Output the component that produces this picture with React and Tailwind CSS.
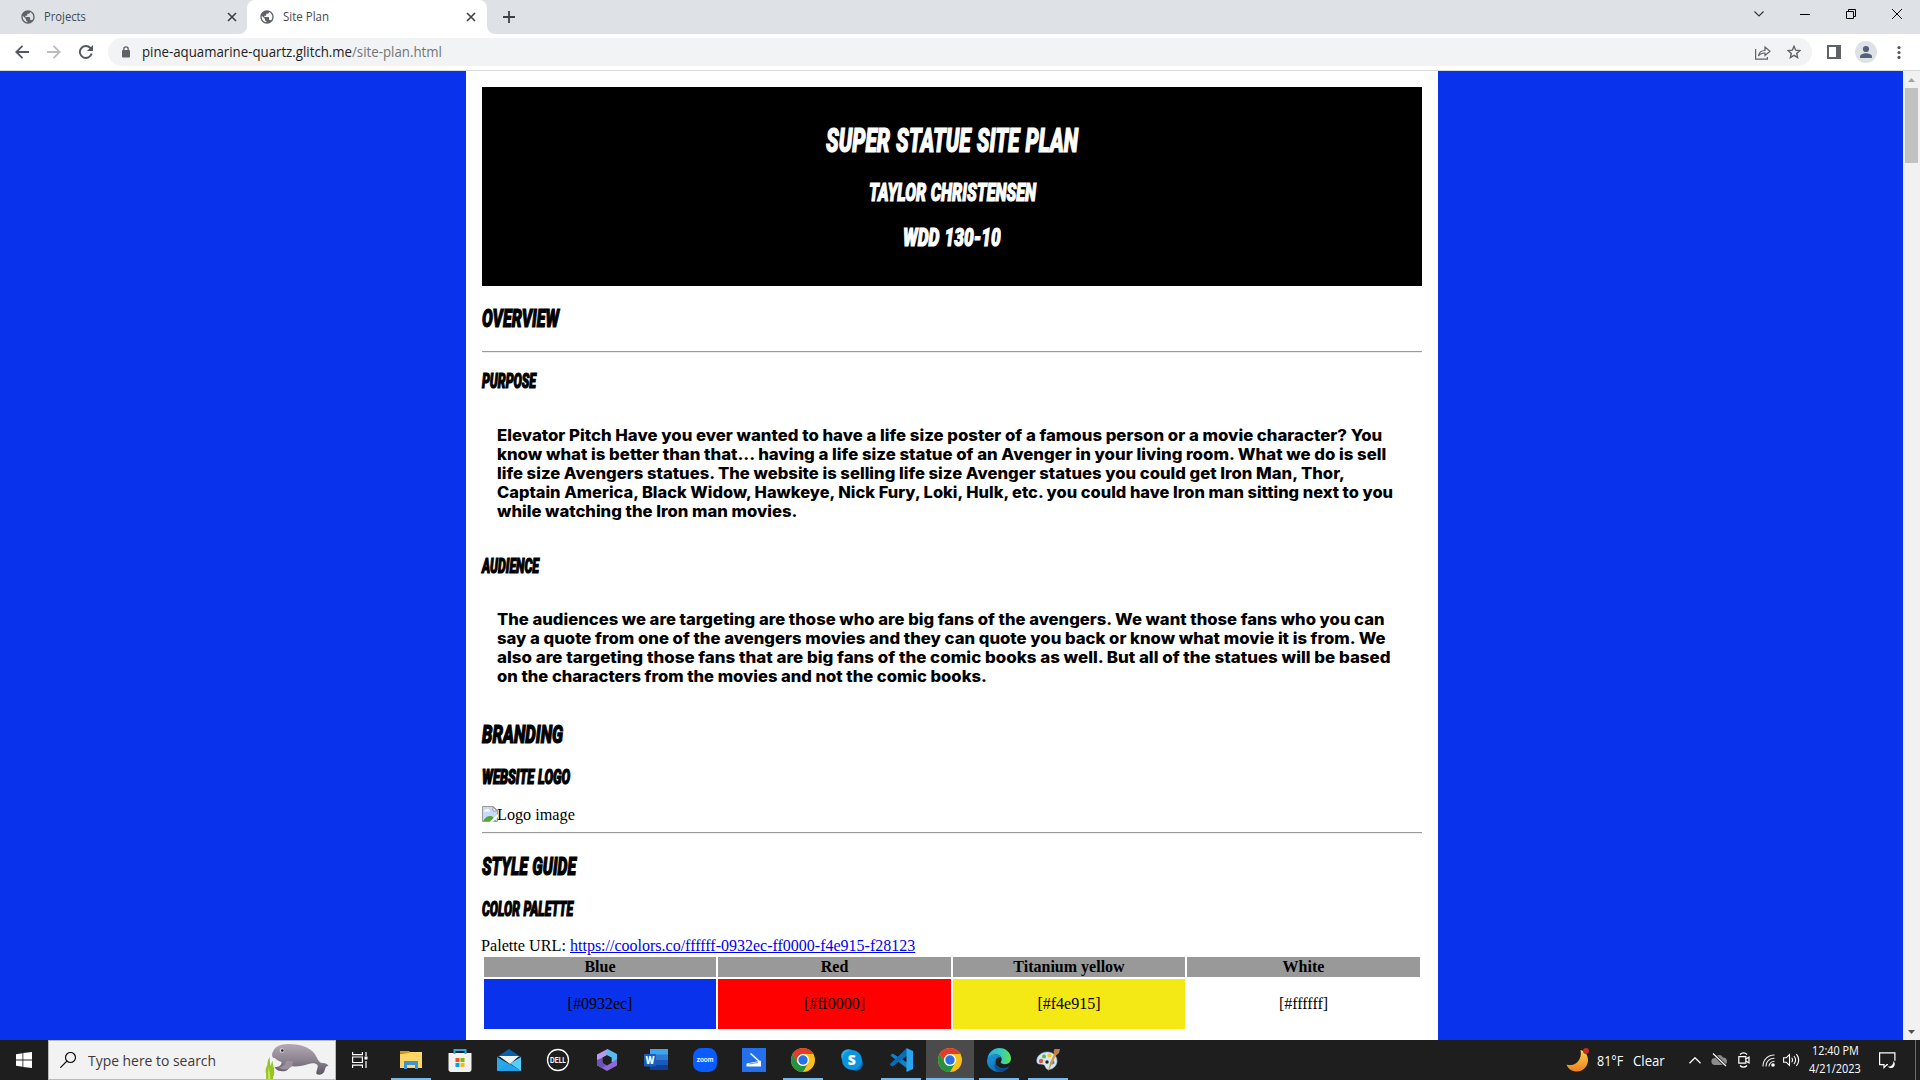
import { useLayoutEffect, useRef, useState } from "react";

/* Stretches a single line of text horizontally so it fills its box. */
function Fit({ className = "", inner = "", children }) {
  const box = useRef(null);
  const text = useRef(null);
  const [s, setS] = useState(1);
  useLayoutEffect(() => {
    setS(box.current.offsetWidth / text.current.offsetWidth);
  }, []);
  return (
    <span ref={box} className={`block shrink-0 whitespace-nowrap text-left ${className}`}>
      <span ref={text} className={`inline-block origin-left ${inner}`} style={{ transform: `scaleX(${s})` }}>
        {children}
      </span>
    </span>
  );
}

const COMIC = "font-['Roboto'] font-black uppercase italic [-webkit-text-stroke:1.2px_currentColor] [word-spacing:0.04em] whitespace-pre";

function Title({ className, children }) {
  return (
    <Fit className={className} inner={COMIC}>
      {children}
    </Fit>
  );
}

function Hr({ className = "" }) {
  return <div className={`h-[2px] border-t border-b border-t-[#9a9a9a] border-b-[#eeeeee] ${className}`} />;
}

function Para({ lines, className = "" }) {
  return (
    <div className={`pl-[15px] font-['Inter'] text-[15.5px] font-extrabold leading-[20px] text-black ${className}`}>
      {lines.map(([w, t]) => (
        <Fit key={t} className={`h-[19px] ${w}`}>
          {t}
        </Fit>
      ))}
    </div>
  );
}

function Globe() {
  return (
    <svg className="size-4 shrink-0" viewBox="0 0 24 24" fill="#5f6368">
      <path d="M12 2C6.48 2 2 6.48 2 12s4.48 10 10 10 10-4.48 10-10S17.52 2 12 2zm-1 17.93c-3.95-.49-7-3.85-7-7.93 0-.62.08-1.21.21-1.79L9 15v1c0 1.1.9 2 2 2v1.93zm6.9-2.54c-.26-.81-1-1.39-1.9-1.39h-1v-3c0-.55-.45-1-1-1H8v-2h2c.55 0 1-.45 1-1V7h2c1.1 0 2-.9 2-2v-.41c2.93 1.19 5 4.06 5 7.41 0 2.08-.8 3.97-2.1 5.39z" />
    </svg>
  );
}

function Cross() {
  return (
    <svg className="size-[10px] shrink-0" viewBox="0 0 10 10" stroke="#3c4043" strokeWidth="1.6">
      <path d="M1 1l8 8M9 1l-8 8" />
    </svg>
  );
}

function TabStrip() {
  return (
    <div className="flex h-[34px] items-stretch bg-[#dee1e6] font-['Open_Sans'] text-[12px] text-[#45494d]">
      <div className="flex w-[247px] items-center pl-5 pr-[10px]">
        <Globe />
        <Fit className="ml-2 w-[42px]">Projects</Fit>
        <div className="ml-auto"><Cross /></div>
      </div>
      <div className="relative flex w-[240px] items-center rounded-t-lg bg-white pl-3 pr-[11px]">
        <svg className="absolute -left-2 bottom-0 size-2" viewBox="0 0 8 8" fill="#fff"><path d="M8 0v8H0a8 8 0 0 0 8-8z" /></svg>
        <svg className="absolute -right-2 bottom-0 size-2" viewBox="0 0 8 8" fill="#fff"><path d="M0 0v8h8a8 8 0 0 1-8-8z" /></svg>
        <Globe />
        <Fit className="ml-2 w-[46px]">Site Plan</Fit>
        <div className="ml-auto"><Cross /></div>
      </div>
      <svg className="ml-4 mt-[11px] size-3" viewBox="0 0 12 12" stroke="#3c4043" strokeWidth="1.8"><path d="M6 0v12M0 6h12" /></svg>
      <div className="ml-auto flex h-7 items-center pr-[18px]">
        <svg className="mr-[36px] h-[6px] w-[10px]" viewBox="0 0 10 6" fill="none" stroke="#333" strokeWidth="1.1"><path d="M.5 .5L5 5 9.500 .5" /></svg>
        <div className="mr-[36px] h-px w-[10px] bg-black" />
        <svg className="mr-[36px] size-[10px]" viewBox="0 0 10 10" fill="none" stroke="#000"><path d="M.5 2.500h7v7h-7zM2.500 2.500v-2h7v7h-2" /></svg>
        <svg className="size-[10px]" viewBox="0 0 10 10" stroke="#000"><path d="M0 0l10 10M10 0L0 10" /></svg>
      </div>
    </div>
  );
}

function Toolbar() {
  return (
    <div className="flex h-[37px] items-start border-b border-[#d9dadc] bg-white">
      <div className="flex h-9 w-[108px] items-center pl-[15px]">
        <svg className="size-[14px]" viewBox="0 0 14 14" fill="none" stroke="#54585c" strokeWidth="1.8"><path d="M14 7H1.500M7.500.8L1.300 7l6.200 6.200" /></svg>
        <svg className="ml-[18px] size-[14px]" viewBox="0 0 14 14" fill="none" stroke="#babcbe" strokeWidth="1.8"><path d="M0 7h12.500M6.500.8L12.700 7l-6.200 6.200" /></svg>
        <svg className="ml-[18px] size-[14px]" viewBox="0 0 14 14" fill="none" stroke="#54585c" strokeWidth="1.9"><path d="M12.700 8.500A6 6 0 1 1 11.400 3l1.200 1.400" /><path d="M14 0v6H8z" fill="#54585c" stroke="none" /></svg>
      </div>
      <div className="mt-1 flex h-7 w-[1704px] items-center rounded-full bg-[#f1f3f4] pl-[14px] pr-[11px] font-['Open_Sans'] text-[14px]">
        <svg className="h-[12px] w-[8px]" viewBox="0 0 8 12"><path d="M1.800 5V3a2.200 2.200 0 0 1 4.400 0v2" fill="none" stroke="#5f6368" strokeWidth="1.300" /><rect y="4" width="8" height="7.500" rx="1" fill="#5f6368" /></svg>
        <Fit className="mb-px ml-3 w-[210px] text-[#202124]">pine-aquamarine-quartz.glitch.me</Fit>
        <Fit className="mb-px w-[90px] text-[#70757a]">/site-plan.html</Fit>
        <svg className="ml-auto h-[15px] w-[16px]" viewBox="0 0 16 15" fill="none" stroke="#5f6368" strokeWidth="1.200"><path d="M.6 4v10.200h11.800V12M3.500 11c.5-4 3-5.500 6.500-5.500V2l5 4.300-5 4.200V8C7 8 5 8.800 3.500 11z" /></svg>
        <svg className="ml-4 size-[14px]" viewBox="0 0 14 14" fill="none" stroke="#5f6368" strokeWidth="1.400"><path d="M7 1.300l1.700 3.900 4.100.4-3.100 2.800.9 4.200L7 10.400l-3.600 2.200.9-4.200-3.100-2.800 4.100-.4z" /></svg>
      </div>
      <div className="flex h-9 items-center pl-[15px]">
        <svg className="size-[14px]" viewBox="0 0 14 14"><path d="M0 0h14v14H0zM2 2v10h7V2z" fill="#5f6368" fillRule="evenodd" /></svg>
        <svg className="ml-[14px] size-[22px]" viewBox="0 0 22 22"><circle cx="11" cy="11" r="11" fill="#dee1e6" /><g fill="#54617a"><circle cx="11" cy="8" r="3.100" /><path d="M5 17v-1.500C5 13.300 9 12.200 11 12.200s6 1.100 6 3.300V17z" /></g></svg>
        <svg className="ml-5 h-[13px] w-[4px]" viewBox="0 0 4 13" fill="#54585c"><circle cx="2" cy="1.600" r="1.600" /><circle cx="2" cy="6.500" r="1.600" /><circle cx="2" cy="11.400" r="1.600" /></svg>
      </div>
    </div>
  );
}

function Scrollbar() {
  return (
    <div className="flex w-[17px] flex-col items-center bg-[#f1f1f1]">
      <div className="flex h-[17px] items-center"><svg className="h-1 w-[7px]" viewBox="0 0 7 4" fill="#a3a3a3"><path d="M3.500 0L7 4H0z" /></svg></div>
      <div className="h-[75px] w-[13px] bg-[#c1c1c1]" />
      <div className="mt-auto flex h-[17px] items-center"><svg className="h-1 w-[7px]" viewBox="0 0 7 4" fill="#505050"><path d="M3.500 4L7 0H0z" /></svg></div>
    </div>
  );
}

const PITCH = [
  ["w-[885px]", "Elevator Pitch Have you ever wanted to have a life size poster of a famous person or a movie character? You"],
  ["w-[889px]", "know what is better than that... having a life size statue of an Avenger in your living room. What we do is sell"],
  ["w-[848px]", "life size Avengers statues. The website is selling life size Avenger statues you could get Iron Man, Thor,"],
  ["w-[896px]", "Captain America, Black Widow, Hawkeye, Nick Fury, Loki, Hulk, etc. you could have Iron man sitting next to you"],
  ["w-[300px]", "while watching the Iron man movies."],
];
const AUDIENCE = [
  ["w-[888px]", "The audiences we are targeting are those who are big fans of the avengers. We want those fans who you can"],
  ["w-[889px]", "say a quote from one of the avengers movies and they can quote you back or know what movie it is from. We"],
  ["w-[894px]", "also are targeting those fans that are big fans of the comic books as well. But all of the statues will be based"],
  ["w-[490px]", "on the characters from the movies and not the comic books."],
];

function Palette() {
  const head = ["Blue", "Red", "Titanium yellow", "White"];
  const cells = [
    ["bg-[#0932ec]", "[#0932ec]"],
    ["bg-[#ff0000]", "[#ff0000]"],
    ["bg-[#f4e915]", "[#f4e915]"],
    ["bg-white", "[#ffffff]"],
  ];
  return (
    <div className="grid grid-cols-[232px_233px_232px_233px] gap-[2px] px-[2px] text-center">
      {head.map((h) => <div key={h} className="h-5 bg-[#999999] font-bold leading-5">{h}</div>)}
      {cells.map(([c, t]) => <div key={t} className={`h-[50px] leading-[50px] ${c}`}>{t}</div>)}
    </div>
  );
}

function Page() {
  return (
    <div className="flex h-[969px] bg-[#0932ec]">
      <div className="ml-[466px] h-full w-[972px] overflow-hidden bg-white px-4 pt-4 font-['Liberation_Serif',serif] text-[16px] text-black">
        <header className="flex h-[199px] flex-col items-center bg-black pt-[35px] text-white">
          <Title className="h-10 w-[252px] text-[34px] leading-[36px]">Super Statue Site Plan</Title>
          <Title className="mt-[17px] h-7 w-[167px] text-[25.5px] leading-[26px]">Taylor Christensen</Title>
          <Title className="mt-[17px] h-7 w-[98px] text-[25.5px] leading-[26px]">WDD 130-10</Title>
        </header>
        <Title className="mt-[19px] h-[46px] w-[77px] text-[25.5px] leading-[26px]">Overview</Title>
        <Hr />
        <Title className="mt-[18px] h-[20px] w-[54px] text-[19.5px] leading-[22px]">Purpose</Title>
        <Para className="mt-[35px] h-[95px]" lines={PITCH} />
        <Title className="mt-[35px] h-[20px] w-[57px] text-[19.5px] leading-[22px]">Audience</Title>
        <Para className="mt-[34px] h-[76px]" lines={AUDIENCE} />
        <Title className="mt-[35px] h-[28px] w-[81px] text-[25.5px] leading-[26px]">Branding</Title>
        <Title className="mt-[18px] h-[20px] w-[88px] text-[19.5px] leading-[22px]">Website Logo</Title>
        <div className="mt-[19px] flex h-[26px]">
          <svg className="size-4 shrink-0" viewBox="0 0 16 16">
            <path d="M.5.5h11l4 4v11H.5z" fill="#c6dafb" stroke="#9b9b9b" />
            <path d="M2 5.500a2 2 0 0 1 2.500-1.800A2 2 0 0 1 8 5.500z" fill="#fff" />
            <path d="M1 15c2-3 4-5 7-5s4 2 6 5z" fill="#55a63a" />
            <path d="M11 1v4h4z" fill="#fff" stroke="#9b9b9b" />
            <path d="M16 9v-1L7.500 16H11l5-5z" fill="#fff" />
          </svg>
          <Fit className="-ml-px h-[18px] w-[78px] leading-[18px]">Logo image</Fit>
        </div>
        <Hr />
        <Title className="mt-[19px] h-[28px] w-[94px] text-[25.5px] leading-[26px]">Style Guide</Title>
        <Title className="mt-[18px] h-[20px] w-[91px] text-[19.5px] leading-[22px]">Color Palette</Title>
        <div className="mt-[18px] flex h-[20px] leading-[18px]">
          <Fit className="-ml-px w-[89px]" inner="whitespace-pre">Palette URL: </Fit>
          <Fit className="w-[345px] text-[#0000ee]" inner="underline">https://coolors.co/ffffff-0932ec-ff0000-f4e915-f28123</Fit>
        </div>
        <Palette />
      </div>
      <div className="ml-auto flex"><Scrollbar /></div>
    </div>
  );
}

function Chrome() {
  return (
    <svg className="size-6" viewBox="0 0 24 24">
      <circle cx="12" cy="12" r="12" fill="#fbc116" />
      <path d="M1.610 6A12 12 0 0 1 22.390 6H12a6 6 0 0 0-5.200 9z" fill="#e33b2e" />
      <path d="M1.610 6A12 12 0 0 0 12 24l5.200-9a6 6 0 0 1-10.400 0z" fill="#229342" />
      <circle cx="12" cy="12" r="6" fill="#fff" />
      <circle cx="12" cy="12" r="4.700" fill="#2673e8" />
    </svg>
  );
}

const APPS = [
  { run: true, icon: <svg className="size-6" viewBox="0 0 24 24"><path d="M1 3h9l2 2H1z" fill="#d99a10" /><path d="M1 5.500L10 5l1-1h12v16H1z" fill="#ffd767" /><path d="M5 13h14v8h-3v-4H8v4H5z" fill="#3f94d6" /></svg> },
  { icon: <svg className="size-6" viewBox="0 0 24 24"><path d="M.5 5h23v16a2.500 2.500 0 0 1-2.500 3H3a2.500 2.500 0 0 1-2.500-3z" fill="#f2f2f2" /><path d="M6.500 6V2h11v4" fill="none" stroke="#29a9e8" strokeWidth="2" /><path d="M7.500 10h4v4h-4z" fill="#f25022" /><path d="M12.500 10h4v4h-4z" fill="#7fba00" /><path d="M7.500 15h4v4h-4z" fill="#00a4ef" /><path d="M12.500 15h4v4h-4z" fill="#ffb900" /></svg> },
  { icon: <svg className="size-6" viewBox="0 0 24 24"><path d="M0 9L12 1l12 8z" fill="#0a61ab" /><path d="M2 8h20l-9 8z" fill="#f3f3f3" /><path d="M0 9l24 14H0z" fill="#29a8ea" /><path d="M24 9v14L13 15.500z" fill="#53d0fa" /><path d="M0 23l12-7.500L24 23z" fill="#25a2e7" /></svg> },
  { icon: <svg className="size-6" viewBox="0 0 24 24"><circle cx="12" cy="12" r="10.500" fill="none" stroke="#fff" strokeWidth="1.300" /><text x="4" y="14.800" textLength="16" lengthAdjust="spacingAndGlyphs" fontFamily="Inter, sans-serif" fontSize="7.500" fontWeight="700" fill="#fff">DELL</text></svg> },
  { icon: (
    <svg className="size-6" viewBox="0 0 24 24">
      <path d="M12.500 1L2 6.500v10.800l5.500 2.400V9.500L16 5z" fill="#b79af0" />
      <path d="M12.500 1L22 6v7l-5.500 1.500v-5L11 6.800z" fill="#58bdec" />
      <path d="M22 11v6.500L12 23l-8-4.500 4.500-2.500 3.500 1.500 5-3z" fill="#8f6ad6" />
      <path d="M2 12v5.300L7 20l4.500-2.700L8 15V9.500z" fill="#6a55b5" />
      <path d="M12 7.500l4.300 2.200v4.600L12 16.500l-4.300-2.200V9.700z" fill="#1e1e1e" />
    </svg>
  ) },
  { icon: <svg className="size-6" viewBox="0 0 24 24"><path d="M6 1h18v6H6z" fill="#41a5ee" /><path d="M6 6.500h18V12H6z" fill="#2b7cd3" /><path d="M6 12h18v5.500H6z" fill="#185abd" /><path d="M6 17h18v5H6z" fill="#103f91" /><rect y="6" width="12" height="12.500" rx="1" fill="#1a5dbe" /><text x="1.500" y="16" fontFamily="Open Sans, sans-serif" fontSize="10" fontWeight="800" fill="#fff" textLength="9" lengthAdjust="spacingAndGlyphs">W</text></svg> },
  { icon: <svg className="size-6" viewBox="0 0 24 24"><rect width="24" height="24" rx="8.500" fill="#0b5cff" /><text x="3.500" y="14.300" textLength="17" lengthAdjust="spacingAndGlyphs" fontFamily="Inter, sans-serif" fontSize="7" fontWeight="600" fill="#fff">zoom</text></svg> },
  { icon: <svg className="size-6" viewBox="0 0 24 24"><path d="M0 0h24v24H0z" fill="#2470ec" /><path d="M8.500 5.500L18 14" stroke="#fff" strokeWidth="1.500" /><path d="M4.500 15.500L19 12.800v5.700H4.500z" fill="#fff" /><path d="M7 16l9-1.500" stroke="#2470ec" strokeWidth=".7" /></svg> },
  { run: true, icon: <Chrome /> },
  { icon: <svg className="size-6" viewBox="0 0 24 24"><circle cx="8.500" cy="8.500" r="7.300" fill="#28b4ef" /><circle cx="15.500" cy="15.500" r="7.300" fill="#0873c4" /><circle cx="12" cy="12" r="10" fill="#0d94df" /><text x="7.800" y="17" fontFamily="Open Sans, sans-serif" fontSize="14" fontWeight="800" fill="#fff">S</text></svg> },
  { run: true, icon: <svg className="size-6" viewBox="0 0 24 24"><path d="M2 7.500L18 20v-5L3.500 6z" fill="#1382c9" stroke="#1382c9" strokeLinejoin="round" /><path d="M1 16.500L17.500 1v6.500L3.500 18z" fill="#0a6cb3" stroke="#0a6cb3" strokeLinejoin="round" /><path d="M17.500 0L24 3v18l-6.500 3z" fill="#27a4f2" /></svg> },
  { run: true, active: true, icon: <Chrome /> },
  { run: true, icon: (
    <svg className="size-6" viewBox="0 0 24 24">
      <defs>
        <linearGradient id="edgeTop"><stop offset="0" stopColor="#2aa8e8" /><stop offset=".6" stopColor="#36cdb4" /><stop offset="1" stopColor="#64df52" /></linearGradient>
        <linearGradient id="edgeLow" x2="1" y2="1"><stop offset="0" stopColor="#1b9de2" /><stop offset="1" stopColor="#0f529c" /></linearGradient>
      </defs>
      <path d="M.3 11C1.500 4 6.500 0 12.300 0 19 0 24 5 24 10.500c0 3.500-2.500 5.700-6 5.700-2 0-4.300-.7-4.300-1.900 0-.7 1-1.200 1-3C14.700 8.500 12 6.500 8.500 6.500 5 6.500 2 8.500.3 11z" fill="url(#edgeTop)" />
      <path d="M0 12.500C1 8.500 4.500 6.300 8.500 6.300c3 0 5 1.500 5.800 3.200-3-1-5.800.7-5.800 4.500 0 4 4 6.500 8.500 6.200 2.500-.2 4-1.200 5-1.700C20 22 16 24 12 24 5 24-.5 18.500 0 12.500z" fill="url(#edgeLow)" />
      <path d="M8.500 14c-.2 4.500 4 7 8.500 6.400 2.500-.3 4-1.200 5-1.900-2 3.600-6 5.500-9.500 5.500C8 22 6.500 18 8.500 14z" fill="#0c4b96" />
    </svg>
  ) },
  { run: true, icon: (
    <svg className="size-6" viewBox="0 0 24 24">
      <path d="M11.500 4C17 4 21 8 21 13c0 4.500-4 8.500-8.500 8.500-3 0-2.500-2.500-4-4.200C6.500 15 1 18 .8 13 .6 8 5.500 4 11.500 4z" fill="#d5e9f5" stroke="#9cc0d8" strokeWidth=".6" />
      <circle cx="5" cy="13" r="2.200" fill="#e2574c" /><circle cx="8" cy="8.500" r="2" fill="#67b346" /><circle cx="13.500" cy="7.500" r="2" fill="#f3c530" /><circle cx="11" cy="14" r="1.700" fill="#222" /><circle cx="16.500" cy="14.500" r="2" fill="#4a8fdc" />
      <path d="M12 24l2-9 5-11 2 1-5 11z" fill="#e4933a" /><path d="M17.500 4l1-3 5.500 0-1 4-3 2.500z" fill="#b88150" />
    </svg>
  ) },
];

function Taskbar() {
  return (
    <div className="flex h-10 items-center bg-[#1e1e1f] text-white">
      <svg className="ml-4 size-4 shrink-0" viewBox="0 0 16 16" fill="#fff"><path d="M0 2.200L6.500 1.200v6.400H0zM7.300 1.100L16 0v7.600H7.300zM0 8.400h6.500v6.400L0 13.800zM7.300 8.400H16V16l-8.700-1.100z" /></svg>
      <div className="ml-4 flex h-10 w-72 shrink-0 items-center border border-[#b9b9b9] bg-[#f2f2f2] pl-[11px]">
        <svg className="size-4" viewBox="0 0 16 16" fill="none" stroke="#111" strokeWidth="1.200"><circle cx="10.500" cy="5.500" r="5" /><path d="M7 9L.3 15.700" /></svg>
        <Fit className="ml-3 w-32 font-['Open_Sans'] text-[15px] text-[#3a3a3a]">Type here to search</Fit>
        <svg className="ml-[49px] h-[38px] w-[64px]" viewBox="0 0 64 38">
          <defs><linearGradient id="seacow" x2="0" y2="1"><stop offset="0" stopColor="#b2a9b5" /><stop offset=".5" stopColor="#8e8592" /><stop offset="1" stopColor="#5c5563" /></linearGradient></defs>
          <path d="M1 38C2 32-1 30 2 25c1-3 0-6 3-9-1 4 1 6 0 9 2-1 1-4 3-5-1 4 2 7 1 10 1 4-1 5-1 8z" fill="#93c524" />
          <path d="M3 38c1-5-1-7 1-12 0 5 2 7 1 12z" fill="#d2e35c" />
          <path d="M8 11C9 6 15 3 23 3c14 0 25 4 29 14 1.500 3 3 5 5.500 5 3 0 5 1 6 3-3 0-3 2-4 5-1 3-5 5-8 3-1-3 2-6 1-9-2-2-5-2-9-1-6 2-12 3-19 2 0 4-4 6-9 5-3 0-5-2-6-4 4 0 7-1 7-5-4-1-5-3-7-4-2 0-3-2-2-6z" fill="url(#seacow)" />
          <path d="M21 20c-1 4-3 6-7 6 3 4 10 3 13-1l1-5z" fill="#9a919d" />
          <circle cx="17" cy="9.500" r="2.300" fill="#d9d4da" /><circle cx="17.300" cy="9.500" r="1.300" fill="#222" />
        </svg>
      </div>
      <svg className="ml-4 h-4 w-[17px] shrink-0" viewBox="0 0 17 16" fill="none" stroke="#fff" strokeWidth="1.200"><path d="M.6 0v2.600h9.800V0M.6 5h9.800v5.500H.6zM.6 16v-2.800h9.800V16M14 0v4M14 9v7" /><path d="M12.500 4.500h3v3h-3z" fill="#fff" stroke="none" /></svg>
      <div className="ml-[18px] flex h-10 gap-px">
        {APPS.map((a, i) => (
          <div key={i} className={`flex h-10 w-12 flex-col items-center pt-2 ${a.active ? "bg-[#4b4b4c]" : ""}`}>
            {a.icon}
            {a.run && <div className={`mt-auto h-[2px] bg-[#76b9ed] ${a.active ? "w-12" : "w-10"}`} />}
          </div>
        ))}
      </div>
      <div className="ml-auto flex h-10 items-center font-['Open_Sans']">
        <svg className="size-6 shrink-0" viewBox="0 0 24 24"><defs><linearGradient id="moon" x2="0" y2="1"><stop offset="0" stopColor="#fbd34c" /><stop offset="1" stopColor="#ee7f1c" /></linearGradient></defs><path d="M14.500 2C19 3 22.500 8 22 13c-.6 6-5.500 10.500-11 10.500C6 23.500 2 21 .5 16.500 3 17.500 8 17.500 11.500 14c3-3 4-7.500 3-12z" fill="url(#moon)" /><circle cx="20" cy="3" r="3" fill="#c92a1e" /></svg>
        <Fit className="ml-[7px] w-[26px] text-[14px]">81°F</Fit>
        <Fit className="ml-[10px] w-[32px] text-[14px]">Clear</Fit>
        <svg className="ml-[24px] h-[7px] w-[12px]" viewBox="0 0 12 7" fill="none" stroke="#fff" strokeWidth="1.300"><path d="M.5 6.300L6 .8l5.500 5.500" /></svg>
        <svg className="ml-[10px] h-[14px] w-[17px]" viewBox="0 0 17 14"><path d="M4 12a3.500 3.500 0 0 1-.2-7A4.500 4.500 0 0 1 12 4.500 3.800 3.800 0 0 1 13 12z" fill="#8c8c8c" /><path d="M2 .5L15 13" stroke="#1e1e1f" strokeWidth="3" /><path d="M2 .5L15 13" stroke="#fff" strokeWidth="1.200" /></svg>
        <svg className="ml-[10px] h-[16px] w-[12px]" viewBox="0 0 12 16" fill="none" stroke="#fff" strokeWidth="1.200"><path d="M.8 4.600h7v6.500h-7zM8 7l3-2v6L8 9M2 2.500C4 .3 7 .3 9 2.500M2 13.500c2 2.200 5 2.200 7 0" /></svg>
        <svg className="ml-[12px] h-[13px] w-[13px]" viewBox="0 0 13 13" fill="none" stroke="#e8e8e8" strokeWidth="1.100"><path d="M1 12.500C1 5.500 6 1 12.500 1M4 12.500c0-5 3.500-8.300 8.500-8.300M7 12.500c0-3 2.200-5.200 5.500-5.200" /><circle cx="11" cy="11" r="1.800" fill="#fff" stroke="none" /></svg>
        <svg className="ml-[8px] h-[14px] w-[17px]" viewBox="0 0 17 14" fill="none" stroke="#fff" strokeWidth="1.100"><path d="M.6 4.800h2.600L6.500 1.500v11L3.200 9.200H.6zM8.700 4.700c1 1.400 1 3.200 0 4.600M11 3c2 2.500 2 5.500 0 8M13.400 1.200c2.800 3.500 2.800 8.100 0 11.600" /></svg>
        <div className="ml-[9px] flex w-[52px] flex-col items-center text-[12px] leading-[18px]">
          <Fit className="w-[47px]">12:40 PM</Fit>
          <Fit className="w-[52px]">4/21/2023</Fit>
        </div>
        <svg className="ml-[18px] size-[17px]" viewBox="0 0 17 17"><path d="M9 12.600H8L5 15.500v-2.900H.6V.8h15.300v8" fill="none" stroke="#fff" strokeWidth="1.200" /><path d="M14.500 9c2 2 1.500 5-.5 6.500-2 1-4 .5-5-1 3 .5 5.500-2 5.500-5.500z" fill="#fff" /></svg>
        <div className="ml-[19px] mr-1 h-10 w-px bg-[#6c6c6c]" />
      </div>
    </div>
  );
}

export default function App() {
  return (
    <div className="h-[1080px] w-[1920px] overflow-hidden bg-white">
      <TabStrip />
      <Toolbar />
      <Page />
      <Taskbar />
    </div>
  );
}
